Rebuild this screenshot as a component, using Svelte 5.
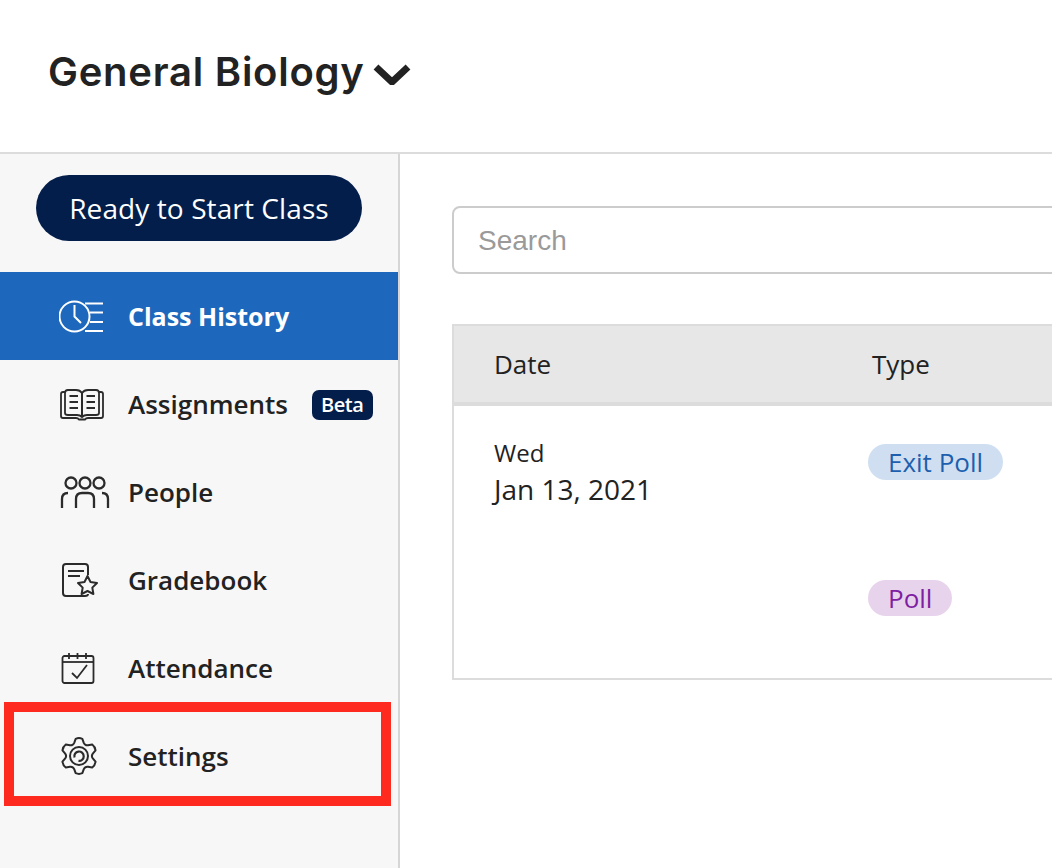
<script>
	const rows = [
		{ day: 'Wed', date: 'Jan 13, 2021', type: 'Exit Poll', kind: 'exit' },
		{ day: '', date: '', type: 'Poll', kind: 'poll' }
	];

	// six rounded teeth around the centre of the 38x38 settings icon
	function polar(r, deg) {
		const a = (deg * Math.PI) / 180;
		return `${(19 + r * Math.cos(a)).toFixed(2)} ${(19 + r * Math.sin(a)).toFixed(2)}`;
	}

	let gear = '';
	for (let k = 0; k < 6; k++) {
		const a = -90 + 60 * k;
		gear += `${k === 0 ? 'M' : 'L'}${polar(17.5, a - 11)}Q${polar(18.6, a)} ${polar(17.5, a + 11)}L${polar(14, a + 20)}Q${polar(12, a + 30)} ${polar(14, a + 40)}`;
	}
	gear += 'Z';
</script>

<div class="page">
	<header class="topbar">
		<h1>General Biology</h1>
		<svg class="chevron" width="38" height="24" viewBox="0 0 38 24" fill="none" stroke="#222" stroke-width="7">
			<path d="M3 6l16 15L35 6" />
		</svg>
	</header>

	<div class="body">
		<aside class="sidebar">
			<div class="start-wrap">
				<button class="start">Ready to Start Class</button>
			</div>
			<nav>
				<div class="item active">
					<svg class="ic-clock" width="46" height="34" viewBox="0 0 46 34" fill="none" stroke="#fff" stroke-width="2">
						<circle cx="15.500" cy="17.500" r="15" />
						<path d="M15.500 6v11.500l6.500 6.500" />
						<path d="M26 4.500h18M31 13.500h13M31 23h13M26 32h18" />
					</svg>
					<span>Class History</span>
				</div>
				<div class="item">
					<svg class="ic-book" width="46" height="34" viewBox="0 0 46 34" fill="none" stroke="#2b2b2b" stroke-width="1.800">
						<path d="M6 5h-2q-2 0-2 2v22q0 2 2 2h13q2 0 3 1.500h6q1-1.500 3-1.500h13q2 0 2-2v-22q0-2-2-2h-2" />
						<path d="M23 6q-2-3-6-3h-8q-3 0-3 3v20q0 2 3 2h9q3 0 5 2 2-2 5-2h9q3 0 3-2v-20q0-3-3-3h-8q-4 0-6 3z" />
						<path d="M23 6v24" stroke-width="2" />
						<path d="M10.500 9h8.500M10.500 15h8.500M10.500 21h8.500M27.500 9h8.500M27.500 15h8.500M27.500 21h8.500" stroke-width="2" />
					</svg>
					<span>Assignments</span>
					<em class="beta">Beta</em>
				</div>
				<div class="item">
					<svg class="ic-people" width="50" height="36" viewBox="0 0 50 36" fill="none" stroke="#2b2b2b" stroke-width="2.300">
						<circle cx="11" cy="9" r="5.500" />
						<circle cx="25" cy="9" r="5.500" />
						<circle cx="39" cy="9" r="5.500" />
						<path d="M2 34v-9q0-6 6-6M16 34v-9q0-6 6-6h6q6 0 6 6v9M48 34v-9q0-6-6-6" />
					</svg>
					<span>People</span>
				</div>
				<div class="item">
					<svg class="ic-grade" width="38" height="36" viewBox="0 0 38 36" fill="none" stroke="#2b2b2b" stroke-width="2">
						<path d="M27 13v-8q0-3-3-3h-19q-3 0-3 3v26q0 3 3 3h19q3 0 3-2" />
						<path d="M7 9h16M7 14h12" />
						<path d="M26.500 14l3 6 6.500 1-4.700 4.600 1.100 6.400-5.900-3-5.900 3 1.100-6.400-4.700-4.600 6.500-1z" stroke-linejoin="round" />
					</svg>
					<span>Gradebook</span>
				</div>
				<div class="item">
					<svg class="ic-cal" width="34" height="32" viewBox="0 0 34 32" fill="none" stroke="#2b2b2b" stroke-width="1.800">
						<rect x="1.500" y="4" width="31" height="27" rx="2" />
						<path d="M1.500 10h31" />
						<path d="M8 1v6M16.500 1v6M25 1v6" />
						<path d="M11 21l5 5 10-13" />
					</svg>
					<span>Attendance</span>
				</div>
				<div class="item">
					<svg class="ic-gear" width="38" height="38" viewBox="0 0 38 38" fill="none" stroke="#2b2b2b" stroke-width="2">
						<path d={gear} stroke-linejoin="round" />
						<circle cx="19" cy="19" r="9" />
						<path d="M14.500 20.500a4.700 4.700 0 1 1 4 3.400" stroke-width="2.200" />
					</svg>
					<span>Settings</span>
				</div>
			</nav>
		</aside>

		<main class="content">
			<div class="search">Search</div>
			<table>
				<thead>
					<tr>
						<th class="date-col">Date</th>
						<th>Type</th>
					</tr>
				</thead>
				<tbody>
					{#each rows as row}
						<tr>
							<td class="date-col">
								{#if row.day}
									<div class="day">{row.day}</div>
									<div class="date">{row.date}</div>
								{/if}
							</td>
							<td><span class="pill {row.kind}">{row.type}</span></td>
						</tr>
					{/each}
				</tbody>
			</table>
		</main>
	</div>

	<div class="highlight"></div>
</div>

<style>
	:global(body) {
		margin: 0;
		background: #fff;
		overflow: hidden;
	}

	.page {
		position: relative;
		width: 1052px;
		height: 868px;
		overflow: hidden;
		font-family: 'Open Sans', 'Noto Sans', sans-serif;
		color: #222;
	}

	.topbar {
		display: flex;
		align-items: center;
		height: 142px;
		padding: 0 0 10px 48px;
		border-bottom: 2px solid #dcdcdc;
	}

	h1 {
		margin: 0;
		font-family: Inter, sans-serif;
		font-size: 40px;
		font-weight: 600;
		color: #222;
		letter-spacing: 0.75px;
	}

	.chevron {
		margin: 3px 0 0 8px;
	}

	.body {
		display: flex;
		height: 714px;
	}

	.sidebar {
		width: 398px;
		flex: none;
		background: #f7f7f7;
		border-right: 2px solid #d6d6d6;
	}

	.start-wrap {
		padding: 21px 0 31px 36px;
	}

	.start {
		display: block;
		width: 326px;
		height: 66px;
		padding: 0;
		border: none;
		border-radius: 33px;
		background: #031e4b;
		color: #fff;
		font: 400 28px 'Open Sans', sans-serif;
		letter-spacing: 0.1px;
	}

	.item {
		display: flex;
		align-items: center;
		height: 88px;
		padding-left: 128px;
		position: relative;
		font-size: 26px;
		font-weight: 600;
		color: #222;
	}

	.item svg {
		position: absolute;
		top: 50%;
		transform: translateY(-50%);
	}

	.ic-clock,
	.ic-book {
		left: 59px;
	}

	.ic-people,
	.ic-gear {
		left: 60px;
	}

	.ic-grade,
	.ic-cal {
		left: 61px;
	}

	.item.active {
		background: #1d68bd;
		color: #fff;
		font-size: 25px;
		font-weight: 700;
	}

	.beta {
		margin: 1px 0 0 24px;
		padding: 0 9px;
		height: 30px;
		line-height: 30px;
		border-radius: 7px;
		background: #031e4b;
		color: #fff;
		font-size: 20px;
		font-style: normal;
		font-weight: 600;
		letter-spacing: -0.4px;
	}

	.content {
		flex: 1;
		padding: 52px 0 0 52px;
		overflow: hidden;
	}

	.search {
		box-sizing: border-box;
		width: 640px;
		height: 68px;
		padding-left: 24px;
		border: 2px solid #ccc;
		border-radius: 8px;
		font: 400 28px/65px 'Liberation Sans', sans-serif;
		color: #9a9a9a;
	}

	table {
		margin-top: 50px;
		width: 640px;
		height: 356px;
		border-collapse: separate;
		border-spacing: 0;
		border: 2px solid #dcdcdc;
		table-layout: fixed;
	}

	th {
		height: 80px;
		padding: 0;
		box-sizing: border-box;
		background: #e7e7e7;
		border-bottom: 4px solid #dcdcdc;
		text-align: left;
		font-size: 26px;
		font-weight: 400;
	}

	th:not(.date-col) {
		padding-left: 4px;
	}

	td {
		height: 136px;
		padding: 38px 0 0;
		box-sizing: border-box;
		vertical-align: top;
	}

	th.date-col,
	td.date-col {
		width: 414px;
		padding-left: 40px;
		box-sizing: border-box;
	}

	td.date-col {
		padding-top: 31px;
	}

	.day {
		font-size: 24px;
		line-height: 31px;
	}

	.date {
		font-size: 28px;
		line-height: 43px;
	}

	.pill {
		display: inline-block;
		height: 36px;
		padding: 0 20px;
		border-radius: 18px;
		font-size: 26px;
		line-height: 36px;
	}

	.pill.exit {
		background: #cfdff1;
		color: #1d5fae;
	}

	.pill.poll {
		background: #e8d3ec;
		color: #7f1fa2;
	}

	/* annotation drawn over the screenshot */
	.highlight {
		position: absolute;
		left: 4px;
		top: 702px;
		width: 387px;
		height: 104px;
		box-sizing: border-box;
		border: 10px solid #ff2a1f;
		pointer-events: none;
	}
</style>
